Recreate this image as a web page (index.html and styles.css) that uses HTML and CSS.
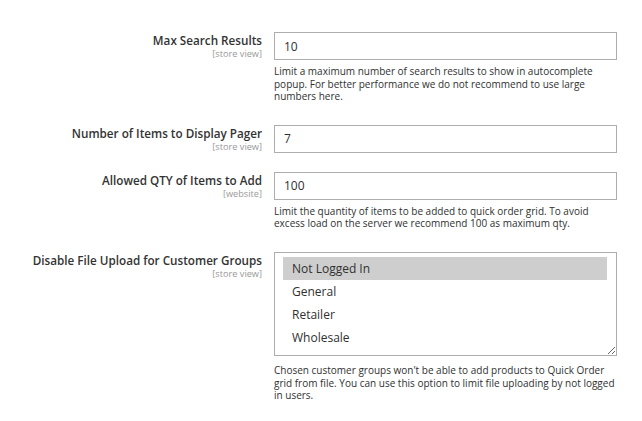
FILE: index.html
```html
<!DOCTYPE html>
<html>
    <head>
        <link rel="stylesheet" href="styles.css">
    </head>
    <body>
        <div class='config'>
            <div class='row'>
                <div class='label'>
                    <span class='title'>Max Search Results</span>
                    <span class='scope'>[store view]</span>
                </div>
                <div class='value'>
                    <input class='text' type='text' value='10'>
                    <p class='note'>Limit a maximum number of search results to show in autocomplete popup. For better performance we do not recommend to use large numbers here.</p>
                </div>
            </div>

            <div class='row'>
                <div class='label'>
                    <span class='title'>Number of Items to Display Pager</span>
                    <span class='scope'>[store view]</span>
                </div>
                <div class='value'>
                    <input class='text' type='text' value='7'>
                </div>
            </div>

            <div class='row'>
                <div class='label'>
                    <span class='title'>Allowed QTY of Items to Add</span>
                    <span class='scope'>[website]</span>
                </div>
                <div class='value'>
                    <input class='text' type='text' value='100'>
                    <p class='note'>Limit the quantity of items to be added to quick order grid. To avoid excess load on the server we recommend 100 as maximum qty.</p>
                </div>
            </div>

            <div class='row'>
                <div class='label'>
                    <span class='title'>Disable File Upload for Customer Groups</span>
                    <span class='scope'>[store view]</span>
                </div>
                <div class='value'>
                    <div class='multiselect'>
                        <div class='option selected'>Not Logged In</div>
                        <div class='option'>General</div>
                        <div class='option'>Retailer</div>
                        <div class='option'>Wholesale</div>
                    </div>
                    <p class='note after-select'>Chosen customer groups won't be able to add products to Quick Order grid from file. You can use this option to limit file uploading by not logged in users.</p>
                </div>
            </div>
        </div>
    </body>
</html>
```
FILE: styles.css
```css
body {
    font-family: "Open Sans", "Liberation Sans", sans-serif;
    margin: 0;
    padding: 0;
    color: #303030;
    background: #fff;
}

.config {
    padding-top: 32px;
}

.row {
    display: grid;
    grid-template-columns: 262px 343px;
    column-gap: 12px;
    margin-bottom: 19px;
}

.label {
    display: flex;
    flex-direction: column;
    align-items: flex-end;
    text-align: right;
}

.label .title {
    font-size: 11.7px;
    font-weight: 600;
    line-height: 16px;
    color: #333;
}

.label .scope {
    font-size: 9.2px;
    line-height: 10px;
    color: #999;
    margin-top: 1px;
}

input.text {
    box-sizing: border-box;
    width: 343px;
    height: 28px;
    margin: 0;
    padding: 0 9px;
    border: 1px solid #adadad;
    border-radius: 0;
    font-family: inherit;
    font-size: 12px;
    color: #303030;
    outline: none;
}

.note {
    margin: 5px 0 3px 0;
    font-size: 10px;
    line-height: 12.6px;
    color: #303030;
}

.note.after-select {
    margin-top: 8px;
}

.multiselect {
    box-sizing: border-box;
    width: 343px;
    height: 104px;
    padding: 4px 9px 0 8px;
    border: 1px solid #adadad;
    overflow: hidden;
    resize: vertical;
}

.option {
    height: 23px;
    line-height: 23px;
    padding-left: 9px;
    font-size: 12px;
    color: #303030;
}

.option.selected {
    background-color: #cecece;
}
```
